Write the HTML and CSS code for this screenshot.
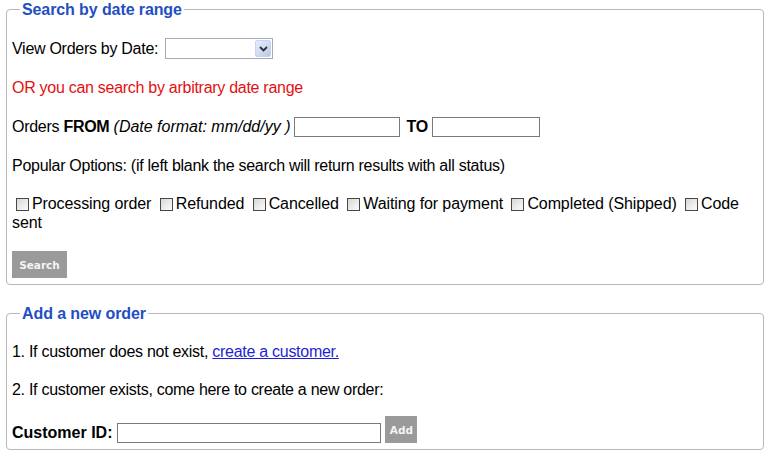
FILE: index.html
```html
<!DOCTYPE html>
<html>
<head>
<meta charset="utf-8">
<title>Orders</title>
<link rel="stylesheet" href="styles.css">
</head>
<body>
<fieldset class="box">
  <legend class="box-title">Search by date range</legend>
  <div class="row row-select">
    <span>View Orders by Date:</span>
    <span class="select">
      <span class="select-value"></span>
      <span class="select-arrow">
        <svg width="9" height="6" viewBox="0 0 9 6"><path d="M1 1 L4.5 4.5 L8 1" fill="none" stroke="#2b2b4a" stroke-width="1.8"/></svg>
      </span>
    </span>
  </div>
  <div class="row note">OR you can search by arbitrary date range</div>
  <div class="row row-input">
    <span>Orders <b class="strong">FROM</b> <i class="hint">(Date format: mm/dd/yy )</i></span>
    <input class="text date-from" type="text">
    <b class="to">TO</b>
    <input class="text date-to" type="text">
  </div>
  <div class="row">Popular Options: (if left blank the search will return results with all status)</div>
  <div class="row checks"><input type="checkbox" class="cb">Processing order <input type="checkbox" class="cb">Refunded <input type="checkbox" class="cb">Cancelled <input type="checkbox" class="cb">Waiting for payment <input type="checkbox" class="cb">Completed (Shipped) <input type="checkbox" class="cb">Code sent</div>
  <div class="row row-button">
    <button class="btn btn-search" type="button">Search</button>
  </div>
</fieldset>

<fieldset class="box box-second">
  <legend class="box-title">Add a new order</legend>
  <div class="row">1. If customer does not exist, <a href="#" class="link">create a customer.</a></div>
  <div class="row">2. If customer exists, come here to create a new order:</div>
  <div class="row row-customer">
    <b class="cust-label">Customer ID:</b>
    <input class="text cust-input" type="text">
    <button class="btn btn-add" type="button">Add</button>
  </div>
</fieldset>
</body>
</html>
```

FILE: styles.css
```css
html, body {
  margin: 0;
  padding: 0;
  background: #ffffff;
}

body {
  font-family: "Liberation Sans", Arial, sans-serif;
  font-size: 16px;
  line-height: 19px;
  color: #000000;
  letter-spacing: -0.28px;
}

.box {
  margin: 0 9px 0 6px;
  padding: 0 5px 6px 5px;
  border: 1px solid #b8b8b8;
  border-radius: 4px;
  min-width: 0;
}

.box-second {
  margin-top: 19px;
}

.box-title {
  font-weight: bold;
  color: #1f4fc4;
  line-height: 19px;
  padding: 0 2px;
  margin-left: 8px;
  letter-spacing: -0.1px;
}

.row {
  margin-top: 19px;
}

.row-select {
  display: flex;
  align-items: center;
  height: 21px;
}

.select {
  display: inline-flex;
  align-items: center;
  justify-content: flex-end;
  box-sizing: border-box;
  width: 108px;
  height: 21px;
  margin-left: 7px;
  border: 1px solid #a5acb2;
  background: #ffffff;
  padding: 1px;
}

.select-value {
  flex: 1;
}

.select-arrow {
  display: flex;
  align-items: center;
  justify-content: center;
  box-sizing: border-box;
  width: 16px;
  height: 17px;
  border: 1px solid #c3d3fd;
  border-radius: 2px;
  background: linear-gradient(135deg, #e6eefc 0%, #cfd9ee 60%, #b9c6e2 100%);
}

.note {
  color: #e31010;
}

.row-input {
  display: flex;
  align-items: center;
  height: 21px;
}

.hint {
  letter-spacing: 0;
}

.text {
  box-sizing: border-box;
  height: 20px;
  border: 1px solid #7a7a7a;
  background: #ffffff;
  padding: 0 2px;
  margin: 0;
  font: inherit;
  outline: none;
}

.date-from {
  width: 106px;
  margin-left: 4px;
}

.to {
  margin-left: 6px;
}

.date-to {
  width: 108px;
  margin-left: 4px;
}

.checks {
  letter-spacing: -0.1px;
}

.cb {
  -webkit-appearance: none;
  appearance: none;
  box-sizing: border-box;
  width: 13px;
  height: 13px;
  margin: 0 3px 0 4px;
  border: 1px solid #474747;
  background: linear-gradient(135deg, #d6d6d6 0%, #ececec 55%, #fbfbfb 100%);
  vertical-align: -2px;
}

.row-button {
  margin-top: 19px;
  height: 27px;
}

.btn {
  box-sizing: border-box;
  border: none;
  margin: 0;
  padding: 0;
  background: #9a9a9a;
  color: #f4f4f4;
  font-family: "DejaVu Sans", Verdana, sans-serif;
  font-weight: bold;
  font-size: 10.5px;
  letter-spacing: 0;
  cursor: pointer;
}

.btn-search {
  width: 55px;
  height: 27px;
}

.link {
  color: #1f1fd6;
  text-decoration: underline;
}

.row-customer {
  display: flex;
  align-items: flex-end;
  height: 27px;
  margin-top: 17px;
}

.cust-label {
  line-height: 19px;
  padding-bottom: 1px;
  letter-spacing: 0;
}

.cust-input {
  width: 264px;
  margin-left: 5px;
}

.btn-add {
  width: 32px;
  height: 27px;
  margin-left: 4px;
}
```
